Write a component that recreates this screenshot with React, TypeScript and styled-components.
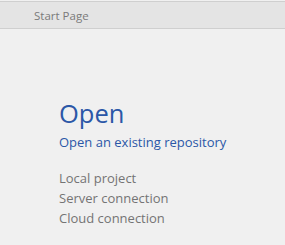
import styled, { createGlobalStyle } from 'styled-components';

const GlobalStyle = createGlobalStyle`
  html, body {
    margin: 0;
    padding: 0;
    background: #f0f0f0;
    font-family: 'Open Sans', 'Noto Sans', sans-serif;
  }
`;

const links = ['Local project', 'Server connection', 'Cloud connection'];

export default function App() {
  return (
    <>
      <GlobalStyle />
      <Page>
        <TabBar>
          <TabTitle>Start Page</TabTitle>
        </TabBar>
        <Content>
          <Heading>Open</Heading>
          <Subtitle>Open an existing repository</Subtitle>
          <LinkList>
            {links.map((label) => (
              <LinkItem key={label}>{label}</LinkItem>
            ))}
          </LinkList>
        </Content>
      </Page>
    </>
  );
}

const Page = styled.div`
  width: 285px;
  height: 245px;
  background: #f0f0f0;
  overflow: hidden;
`;

const TabBar = styled.div`
  margin-top: 1px;
  height: 26px;
  background: #e4e4e4;
  border-top: 1px solid #cfcfcf;
  border-bottom: 1px solid #cfcfcf;
  display: flex;
  align-items: center;
  padding-left: 34px;
`;

const TabTitle = styled.span`
  font-size: 11.5px;
  color: #7a7a7a;
`;

const Content = styled.div`
  padding: 69px 0 0 59px;
`;

const Heading = styled.h1`
  margin: 0;
  font-size: 25.5px;
  font-weight: 400;
  line-height: 30px;
  color: #2b57a7;
`;

const Subtitle = styled.div`
  margin-top: 6px;
  font-size: 13px;
  line-height: 16px;
  color: #2b57a7;
`;

const LinkList = styled.div`
  margin-top: 18px;
  display: flex;
  flex-direction: column;
`;

const LinkItem = styled.div`
  font-size: 13px;
  line-height: 20px;
  color: #747474;
`;
